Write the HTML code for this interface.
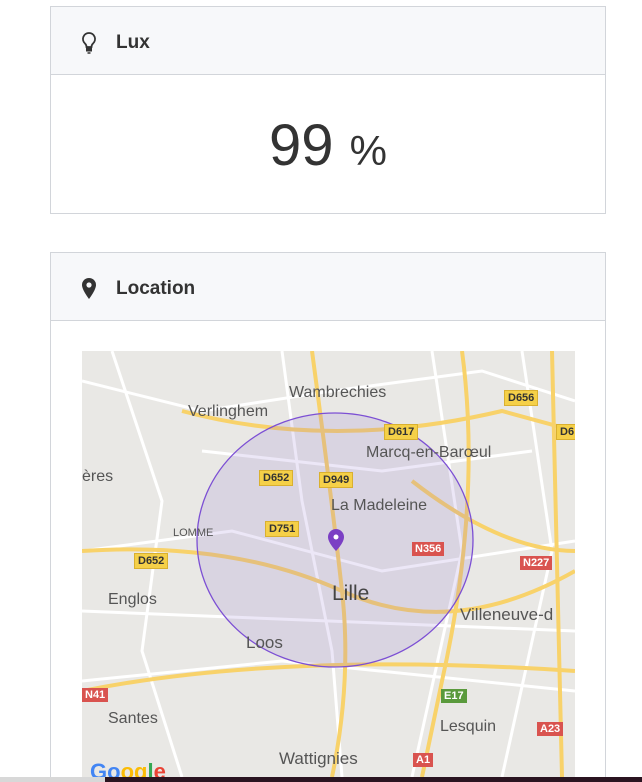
<!DOCTYPE html><html><head><style>
html,body{margin:0;width:642px;height:782px;overflow:hidden}
body{background:#fff;font-family:"Liberation Sans",sans-serif;position:relative}
.card{position:absolute;left:50px;width:554px;border:1px solid #d2d5da;background:#fff}
.hd{height:67px;background:#f7f8fa;border-bottom:1px solid #d2d5da;position:relative}
.hd span{position:absolute;left:65px;top:25px;font-size:19px;font-weight:bold;color:#333}
.lbl{position:absolute;font-size:16px;color:#555;white-space:nowrap}
.sh{position:absolute;font-size:11px;padding:1px 3px;background:#f5d048;border:1px solid #d9b030;color:#333;font-weight:bold}
.rd{position:absolute;font-size:11px;padding:1px 3px;background:#d9534f;color:#fff;font-weight:bold}
</style></head><body>
<div class="card" style="top:6px;height:206px">
<div class="hd"><svg style="position:absolute;left:30px;top:24px" width="16" height="24" viewBox="0 0 16 24"><path d="M8 2a6 6 0 0 0-4 10.5c1 1 1.5 2 1.5 3.5h5c0-1.5.5-2.5 1.5-3.5A6 6 0 0 0 8 2z" fill="none" stroke="#333" stroke-width="1.8"/><rect x="5" y="16.5" width="6" height="4" fill="#333"/><path d="M6.5 22h3" stroke="#333" stroke-width="1.5"/></svg><span>Lux</span></div>
<div style="position:absolute;left:0;right:0;top:104px;text-align:center;font-size:58px;color:#333;line-height:70px">99 <span style="font-size:42px">%</span></div>
</div>
<div class="card" style="top:252px;height:540px;border-bottom:none">
<div class="hd"><svg style="position:absolute;left:30px;top:24px" width="16" height="24" viewBox="0 0 16 24"><path d="M8 1a7 7 0 0 0-7 7c0 5 7 14 7 14s7-9 7-14a7 7 0 0 0-7-7z" fill="#333"/><circle cx="8" cy="8" r="2.6" fill="#f7f8fa"/></svg><span>Location</span></div>
</div>
<div style="position:absolute;left:82px;top:351px;width:493px;height:426px;background:#e9e8e5;overflow:hidden">
<svg width="493" height="426" style="position:absolute;left:0;top:0">
<g stroke="#fff" stroke-width="3" fill="none">
<path d="M0 30 L120 60 L250 40 L400 20 L493 50"/><path d="M0 200 L150 180 L300 220 L493 190"/><path d="M30 0 L80 150 L60 300 L100 426"/><path d="M200 0 L220 150 L250 300 L260 426"/><path d="M350 0 L380 200 L330 426"/><path d="M0 330 L200 310 L493 340"/><path d="M440 0 L470 200 L420 426"/><path d="M120 100 L300 120 L450 100"/><path d="M0 260 L493 280"/></g>
<g stroke="#f8d26a" stroke-width="4" fill="none">
<path d="M0 200 Q150 190 260 240 T493 220"/><path d="M230 0 Q250 150 260 240 T250 426"/><path d="M380 0 Q400 150 360 330 L340 426"/><path d="M0 340 Q200 300 493 320"/><path d="M100 60 Q250 100 420 60 L493 80"/><path d="M470 0 L480 426"/><path d="M330 130 Q420 200 493 200"/></g>
<ellipse cx="253" cy="189" rx="138" ry="127" fill="rgba(140,110,210,0.17)" stroke="#7c4fd4" stroke-width="1.3"/>
<path d="M254 178a8 8 0 0 0-8 8c0 6 8 14 8 14s8-8 8-14a8 8 0 0 0-8-8z" fill="#7b3fc4"/><circle cx="254" cy="186" r="2.5" fill="#fff"/>
</svg>
<div class="lbl" style="left:207px;top:33px">Wambrechies</div>
<div class="lbl" style="left:106px;top:52px">Verlinghem</div>
<div class="lbl" style="left:284px;top:93px">Marcq-en-Barœul</div>
<div class="lbl" style="left:0;top:117px">ères</div>
<div class="lbl" style="left:249px;top:146px">La Madeleine</div>
<div class="lbl" style="left:91px;top:176px;font-size:11px">LOMME</div>
<div class="lbl" style="left:250px;top:231px;font-size:21px;color:#444">Lille</div>
<div class="lbl" style="left:378px;top:254px;font-size:17px">Villeneuve-d</div>
<div class="lbl" style="left:26px;top:240px">Englos</div>
<div class="lbl" style="left:164px;top:282px;font-size:17px">Loos</div>
<div class="lbl" style="left:26px;top:359px">Santes</div>
<div class="lbl" style="left:358px;top:367px">Lesquin</div>
<div class="lbl" style="left:197px;top:398px;font-size:17px">Wattignies</div>
<div class="sh" style="left:422px;top:39px">D656</div><div class="sh" style="left:474px;top:73px">D6</div>
<div class="sh" style="left:302px;top:73px">D617</div><div class="sh" style="left:177px;top:119px">D652</div>
<div class="sh" style="left:237px;top:121px">D949</div><div class="sh" style="left:183px;top:170px">D751</div>
<div class="sh" style="left:52px;top:202px">D652</div>
<div class="rd" style="left:330px;top:191px">N356</div><div class="rd" style="left:438px;top:205px">N227</div>
<div class="rd" style="left:0;top:337px">N41</div><div class="rd" style="left:455px;top:371px">A23</div>
<div class="rd" style="left:331px;top:402px">A1</div><div class="rd" style="left:359px;top:338px;background:#5a9a3c">E17</div>
<div style="position:absolute;left:8px;top:408px;font-size:22px;font-weight:bold;color:#4285f4">Go<span style="color:#fbbc05">og</span><span style="color:#34a853">l</span><span style="color:#ea4335">e</span></div>
</div>
<div style="position:absolute;left:0;top:777px;width:105px;height:5px;background:#d8d8d8"></div>
<div style="position:absolute;left:105px;top:777px;width:537px;height:5px;background:#2a1420"></div>
</body></html>
